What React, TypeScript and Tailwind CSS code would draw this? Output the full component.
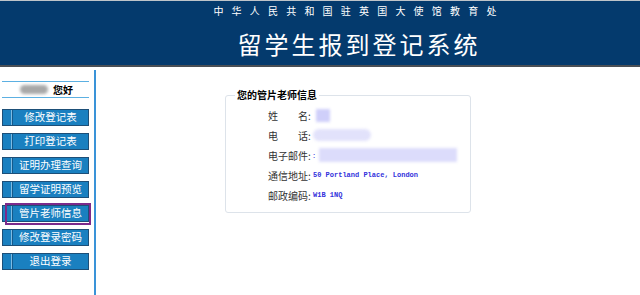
import React from "react";

const cjk = { fontFamily: '"Noto Sans CJK SC", "Noto Sans", sans-serif' };

const menu = [
  "修改登记表",
  "打印登记表",
  "证明办理查询",
  "留学证明预览",
  "管片老师信息",
  "修改登录密码",
  "退出登录",
];

function MenuButton({ label, active }: { label: string; active?: boolean }) {
  return (
    <div className="relative ml-[2px] h-[17px] w-[87px]">
      <div className="flex h-full w-full border border-[#1d4f78] bg-[#1a80c0]">
        <div className="w-[8px]" />
        <div className="w-px bg-[#7cbbe4]" />
        <div className="w-px bg-[#15598a]" />
        <div className="flex flex-1 items-center justify-center text-[10.5px] leading-none text-white">
          {label}
        </div>
      </div>
      {active && (
        <span className="absolute left-[3px] top-[-2px] h-[22px] w-[86px] border-2 border-[#7b2a8b]" />
      )}
    </div>
  );
}

function Row({ label, children }: { label: string; children?: React.ReactNode }) {
  return (
    <div className="flex h-[20px] items-center">
      <span className="w-[45px] whitespace-pre text-[10px] text-[#333]">{label}</span>
      {children}
    </div>
  );
}

const mono = { fontFamily: '"Liberation Mono", monospace' };

export default function App() {
  return (
    <div className="h-[295px] w-[640px] overflow-hidden bg-white" style={cjk}>
      <header className="flex h-[67px] flex-col items-center border-t border-[#bfc4c9] border-b-2 border-b-[#4a4f55] bg-[#043a6d] pl-[78px] text-white">
        <div className="mt-[3px] text-[10px] leading-[14px] tracking-[8.2px]">
          中华人民共和国驻英国大使馆教育处
        </div>
        <div className="mt-[12px] text-[24px] leading-[28px] tracking-[3px]">
          留学生报到登记系统
        </div>
      </header>

      <div className="mt-[3px] flex h-[225px]">
        <aside className="w-[96px] border-r-2 border-[#3a93d8] pt-[11px]">
          <div className="ml-[2px] flex h-[17px] w-[87px] items-center border-y border-[#5cb0e2] pl-[18px]">
            <span className="h-[9px] w-[28px] rounded-full bg-[#a8a8a8] blur-[1.5px]" />
            <span className="ml-[5px] text-[10px] font-bold text-black">您好</span>
          </div>
          <div className="mt-[11px] flex flex-col gap-[7px]">
            {menu.map((m) => (
              <MenuButton key={m} label={m} active={m === "管片老师信息"} />
            ))}
          </div>
        </aside>

        <main className="flex-1 pl-[129px] pt-[19px]">
          <fieldset className="w-[246px] rounded-[3px] border border-[#dde3ea] pb-[7px] pl-[42px]">
            <legend className="-ml-[33px] px-[2px] text-[10px] font-bold leading-[12px] text-black">
              您的管片老师信息
            </legend>
            <div className="mt-[4px]">
              <Row label={"姓　　名:"}>
                <span className="ml-[3px] h-[13px] w-[14px] bg-[#cfcffa] blur-[1.5px]" />
              </Row>
              <Row label={"电　　话:"}>
                <span className="h-[12px] w-[58px] rounded-full bg-[#e2e2fb] blur-[1.5px]" />
              </Row>
              <Row label="电子邮件:">
                <span className="text-[8px] text-[#3535e0]">:</span>
                <span className="ml-[4px] h-[14px] w-[138px] bg-[#dcdcfb] blur-[1.5px]" />
              </Row>
              <Row label="通信地址:">
                <span className="text-[7px] font-bold text-[#3232dc]" style={mono}>
                  50 Portland Place, London
                </span>
              </Row>
              <Row label="邮政编码:">
                <span className="text-[7px] font-bold text-[#3232dc]" style={mono}>
                  W1B 1NQ
                </span>
              </Row>
            </div>
          </fieldset>
        </main>
      </div>
    </div>
  );
}
